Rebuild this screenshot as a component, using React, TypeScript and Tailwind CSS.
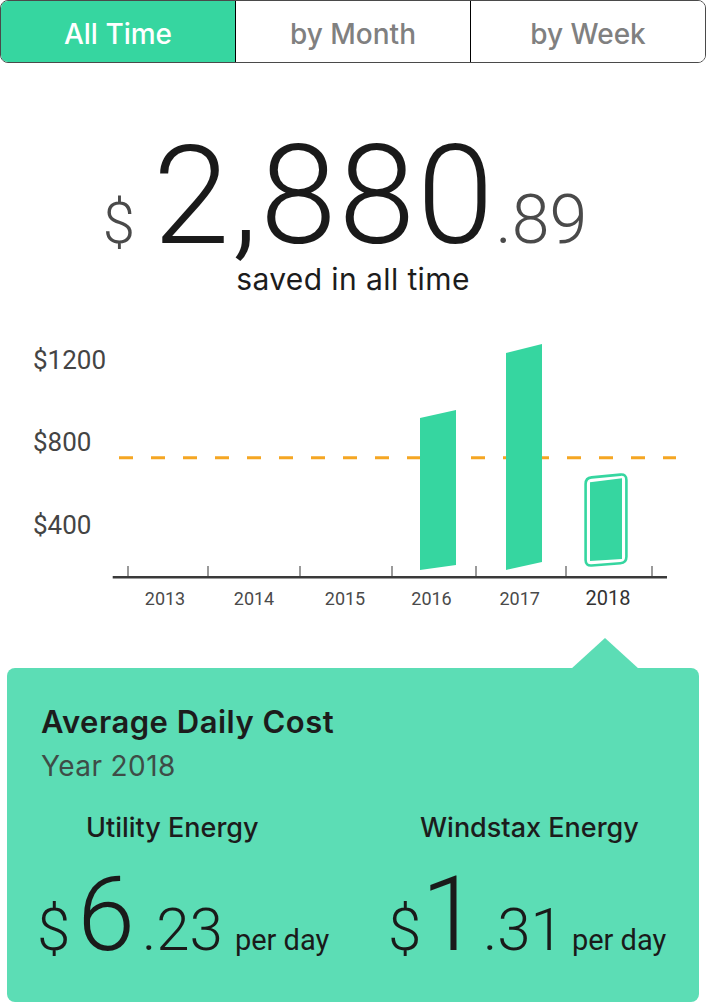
import React from "react";

const tabs = ["All Time", "by Month", "by Week"];

const years = [
  { label: "2013", x: 165 },
  { label: "2014", x: 254 },
  { label: "2015", x: 345 },
  { label: "2016", x: 431.5 },
  { label: "2017", x: 519.7 },
  { label: "2018", x: 608, current: true },
];

const ticks = [128, 208, 300, 392, 476, 566, 652];

function SavingsChart() {
  return (
    <svg width="706" height="290" viewBox="0 0 706 290" className="block">
      <g fontFamily="Roboto, sans-serif" fontSize="26" fill="#444">
        <text x="33" y="39">$1200</text>
        <text x="33" y="121">$800</text>
        <text x="33" y="204">$400</text>
      </g>

      <line
        x1="119"
        y1="127.7"
        x2="676"
        y2="127.7"
        stroke="#f5a623"
        strokeWidth="3"
        strokeDasharray="14 18"
      />

      <polygon points="420,88 456,80 456,235 420,240" fill="#36d6a0" />
      <polygon points="506,23 542,14 542,232 506,240" fill="#36d6a0" />

      <path
        d="M 585.6 154 Q 585.6 148 591.6 147.4 L 620.4 144.6 Q 626.4 144 626.4 150 L 626.4 226.7 Q 626.4 232.7 620.4 233.2 L 591.6 235.5 Q 585.6 236 585.6 230 Z"
        fill="none"
        stroke="#36d6a0"
        strokeWidth="2.6"
      />
      <polygon points="590,152.3 622,148.3 622,229 590,231" fill="#36d6a0" />

      {ticks.map((x) => (
        <line key={x} x1={x} y1="236" x2={x} y2="247" stroke="#9a9a9a" strokeWidth="2" />
      ))}
      <line x1="112.7" y1="247.3" x2="667" y2="247.3" stroke="#3a3a3a" strokeWidth="2.5" />

      {years.map((y) => (
        <text
          key={y.label}
          x={y.x}
          y="275"
          textAnchor="middle"
          fontFamily="Roboto, sans-serif"
          fontSize={y.current ? 20 : 18}
          fill={y.current ? "#333" : "#4a4a4a"}
        >
          {y.label}
        </text>
      ))}
    </svg>
  );
}

function DailyCost({
  label,
  whole,
  cents,
  labelPad,
  wholeGap,
  centsGap,
  dayGap,
}: {
  label: string;
  whole: string;
  cents: string;
  labelPad: string;
  wholeGap: string;
  centsGap: string;
  dayGap: string;
}) {
  return (
    <div className="flex flex-col">
      <div className={`${labelPad} text-[27px] font-medium leading-none text-[#1c1c1c]`}>
        {label}
      </div>
      <div className="mt-[22px] flex items-baseline whitespace-nowrap font-['Roboto',sans-serif] font-light leading-none text-[#1a1a1a]">
        <span className="text-[60px]">$</span>
        <span className={`${wholeGap} text-[104px]`}>{whole}</span>
        <span className={`${centsGap} text-[60px]`}>{cents}</span>
        <span className={`${dayGap} font-normal text-[29px]`}>per day</span>
      </div>
    </div>
  );
}

export default function App() {
  return (
    <div className="w-[706px] h-[1004px] bg-white overflow-hidden font-['Inter',sans-serif]">
      <div className="flex h-[63px] border border-[#4a4a4a] rounded-[8px] overflow-hidden">
        {tabs.map((t, i) => (
          <button
            key={t}
            className={
              i === 0
                ? "flex-1 flex items-center justify-center pt-[4px] bg-[#36d6a0] text-white text-[28px] font-medium"
                : "flex-1 flex items-center justify-center pt-[4px] bg-white text-[#808080] text-[28px] font-medium border-l border-black"
            }
          >
            {t}
          </button>
        ))}
      </div>

      <div className="mt-[64px] flex items-baseline justify-center pr-[16px] font-['Roboto',sans-serif] font-light leading-none">
        <span className="text-[58px] text-[#4a4a4a]">$</span>
        <span className="ml-[18px] text-[138px] tracking-[2px] text-[#1a1a1a]">2,880</span>
        <span className="text-[68px] text-[#4a4a4a]">.89</span>
      </div>
      <div className="text-center text-[30px] tracking-[0.4px] leading-[28px] text-[#1c1c1c]">
        saved in all time
      </div>

      <div className="mt-[37px]">
        <SavingsChart />
      </div>

      <div className="relative mx-[7px] mt-[48px] h-[334px] rounded-[8px] bg-[#5cddb5] pl-[34px] pt-[38px]">
        <svg
          className="absolute left-[564px] top-[-30px]"
          width="68"
          height="31"
          viewBox="0 0 68 31"
        >
          <polygon points="0,31 34,0 68,31" fill="#5cddb5" />
        </svg>
        <div className="text-[31px] font-semibold tracking-[0.5px] leading-none text-[#1c1c1c]">
          Average Daily Cost
        </div>
        <div className="mt-[15px] text-[28px] tracking-[0.4px] leading-none text-[#3e4d47]">
          Year 2018
        </div>
        <div className="mt-[34px] ml-[-4px] grid grid-cols-[351px_1fr]">
          <DailyCost
            label="Utility Energy"
            whole="6"
            cents=".23"
            labelPad="pl-[49px]"
            wholeGap="ml-[7px]"
            centsGap="ml-[7px]"
            dayGap="ml-[12px]"
          />
          <DailyCost
            label="Windstax Energy"
            whole="1"
            cents=".31"
            labelPad="pl-[32px]"
            wholeGap="ml-[0px]"
            centsGap="ml-[4px]"
            dayGap="ml-[8px]"
          />
        </div>
      </div>
    </div>
  );
}
